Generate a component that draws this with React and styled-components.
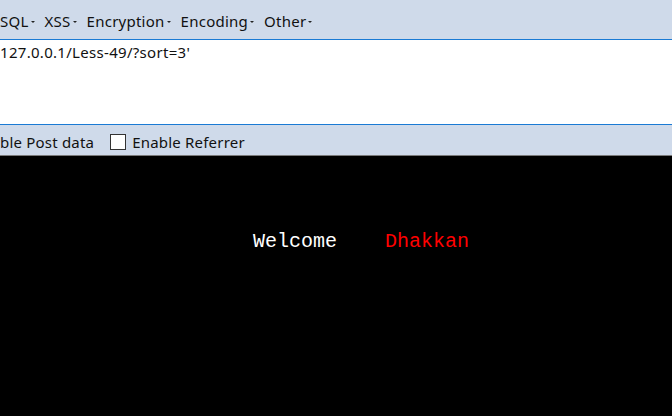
import React from "react"
import styled, { createGlobalStyle } from 'styled-components'

const GlobalStyle = createGlobalStyle`
    html, body {
        margin: 0;
        padding: 0;
        background: #000;
        overflow: hidden;
    }
`

const Page = styled.div`
    width: 672px;
    height: 416px;
    display: flex;
    flex-direction: column;
    font-family: "Noto Sans", "Open Sans", sans-serif;
`

const MenuBar = styled.div`
    height: 40px;
    background: #cfdaea;
    border-bottom: 1px solid #1a7ad4;
    display: flex;
    align-items: center;
    gap: 10px;
    padding-top: 3px;
    box-sizing: border-box;
`

const MenuItem = styled.span`
    font-size: 15px;
    color: #111;
    display: flex;
    align-items: center;
    letter-spacing: 0.25px;

    &::after {
        content: "";
        margin-left: 2px;
        margin-top: 2px;
        border-left: 2px solid transparent;
        border-right: 2px solid transparent;
        border-top: 2px solid #222;
    }
`

const UrlBox = styled.div`
    height: 85px;
    background: #fff;
    border-bottom: 1px solid #1a7ad4;
    font-size: 15px;
    color: #111;
    padding-top: 2px;
    letter-spacing: 0.3px;
    box-sizing: border-box;
`

const OptionBar = styled.div`
    height: 31px;
    background: #cfdaea;
    border-bottom: 1px solid #7a7a7a;
    display: flex;
    align-items: center;
    font-size: 15px;
    color: #111;
    letter-spacing: 0.2px;
    box-sizing: border-box;
    padding-top: 4px;
`

const Option = styled.label`
    display: flex;
    align-items: center;
    margin-right: ${props => props.gap || 0}px;
`

const Check = styled.span`
    width: 14px;
    height: 14px;
    border: 1px solid #333;
    background: #fff;
    margin-right: 6px;
    display: inline-block;
`

const Result = styled.div`
    flex: 1;
    background: #000;
    padding: 74px 0 0 253px;
    font-family: "Liberation Mono", "Courier New", monospace;
    font-size: 20px;
    white-space: pre;
`

const Word = styled.span`
    color: ${props => props.color};
`

const App = () => {
    return (
        <Page>
            <GlobalStyle />
            <MenuBar>
                <MenuItem>SQL</MenuItem>
                <MenuItem>XSS</MenuItem>
                <MenuItem>Encryption</MenuItem>
                <MenuItem>Encoding</MenuItem>
                <MenuItem>Other</MenuItem>
            </MenuBar>
            <UrlBox>127.0.0.1/Less-49/?sort=3'</UrlBox>
            <OptionBar>
                <Option gap={16}>ble Post data</Option>
                <Option><Check />Enable Referrer</Option>
            </OptionBar>
            <Result>
                <Word color="#fff">Welcome</Word>
                {"    "}
                <Word color="#ff0000">Dhakkan</Word>
            </Result>
        </Page>
    )
}

export default App
